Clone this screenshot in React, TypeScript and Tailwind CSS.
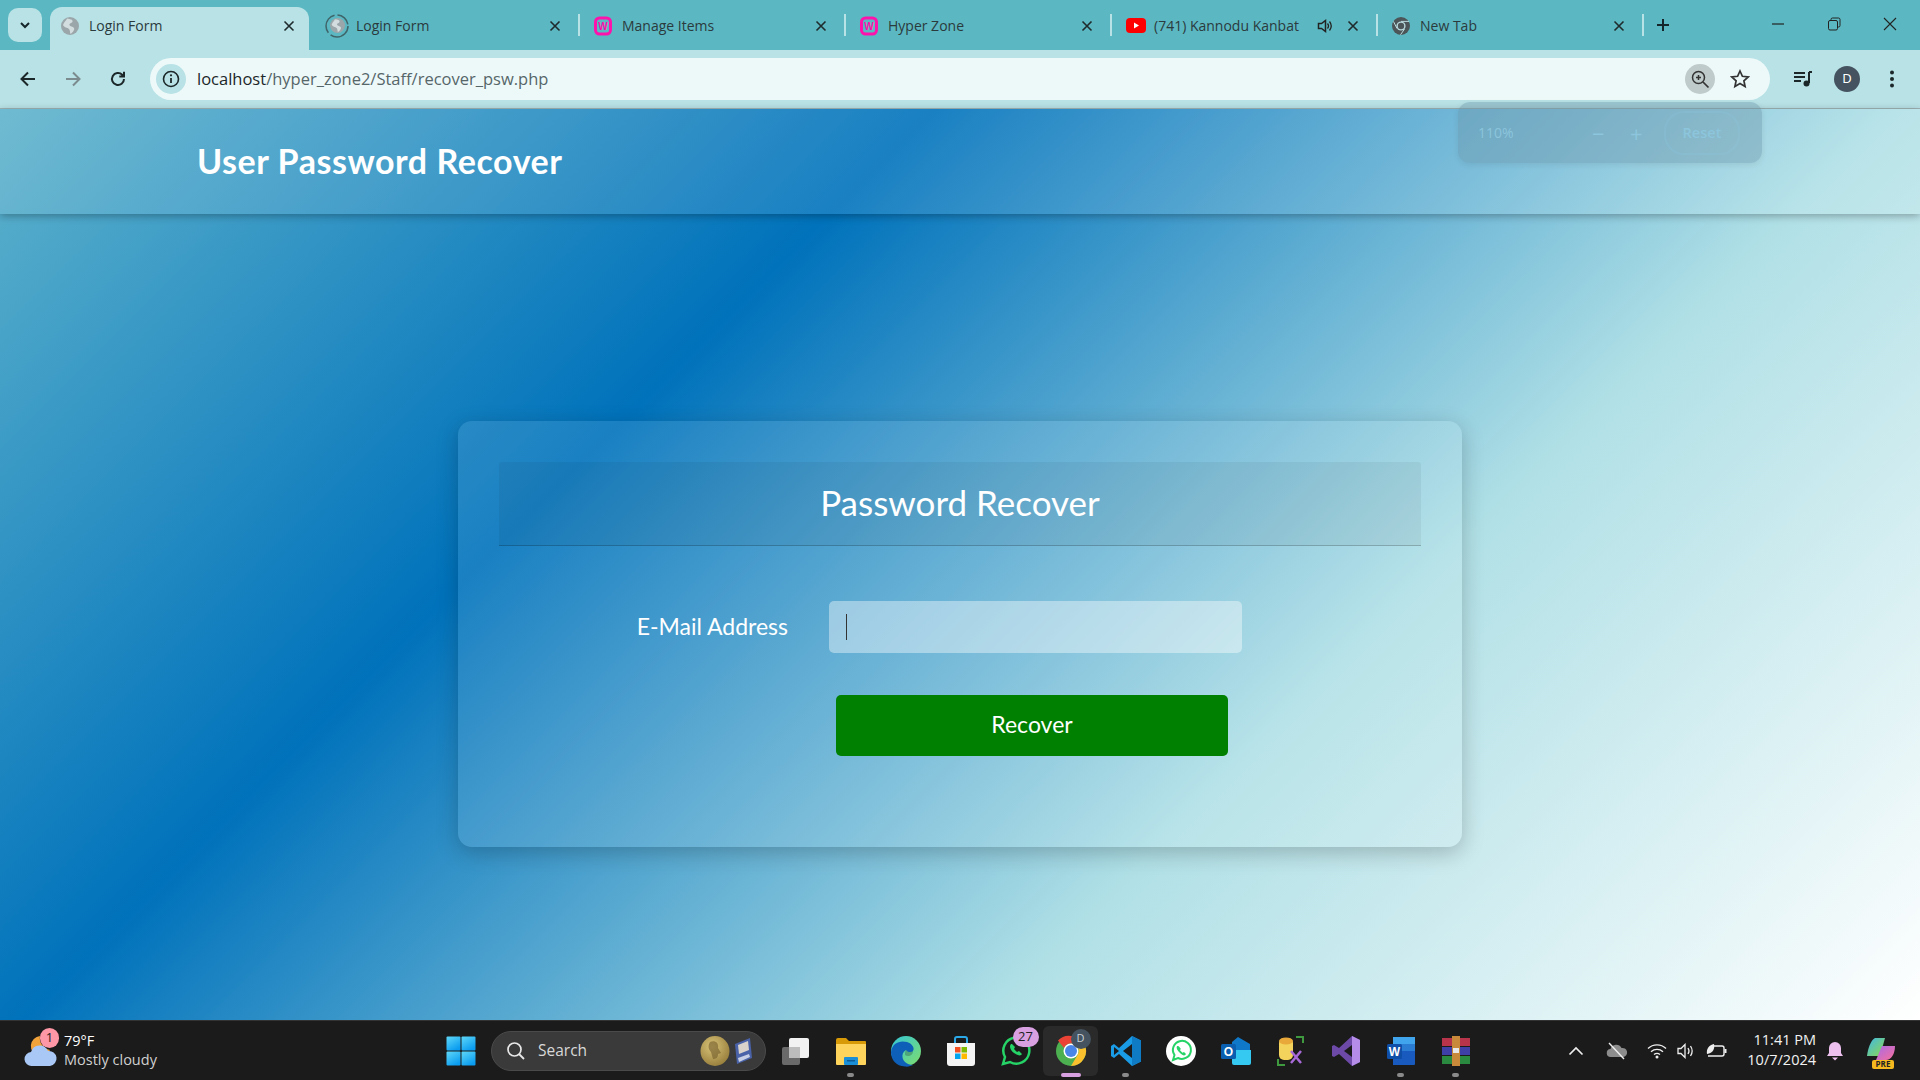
import { FC, ReactNode } from 'react';

const Close: FC = () => (
  <svg width="12" height="12" viewBox="0 0 12 12" className="shrink-0 text-[#1f2a2c]">
    <path d="M1.5 1.5l9 9M10.5 1.5l-9 9" stroke="currentColor" strokeWidth="1.6" />
  </svg>
);

const Globe: FC<{ size?: number }> = ({ size = 18 }) => (
  <svg width={size} height={size} viewBox="0 0 18 18">
    <circle cx="9" cy="9" r="9" fill="#9aa6a9" />
    <path d="M6 1.5c3 .5 6 1 5.5 3S8 6 8.500 8s3.500 1 4.500 3-2 5-3.500 6c-1-2 0-3.500-1.500-5S3 10.500 2 8c1-3 3-4 4-6.500z" fill="#d3dde0" />
  </svg>
);

const WampIcon: FC = () => (
  <svg width="18" height="20" viewBox="0 0 18 20">
    <rect x="1.500" y="2" width="15" height="16" rx="4" fill="none" stroke="#ff12ab" strokeWidth="3" />
    <text x="9" y="14" textAnchor="middle" fontSize="10" fontWeight="700" fill="#ff12ab" fontFamily="Liberation Sans, sans-serif">W</text>
  </svg>
);

const YouTubeIcon: FC = () => (
  <svg width="20" height="15" viewBox="0 0 20 15">
    <rect width="20" height="15" rx="4" fill="#ff0000" />
    <path d="M8 4.500l5 3-5 3z" fill="#fff" />
  </svg>
);

const ChromeMono: FC = () => (
  <svg width="18" height="18" viewBox="0 0 18 18">
    <circle cx="9" cy="9" r="9" fill="#4c5659" />
    <circle cx="9" cy="9" r="4.600" fill="#b9d9dd" />
    <circle cx="9" cy="9" r="3.200" fill="#4c5659" />
    <path d="M9 4.400h8M5 11.500L1.500 4.500M12.500 12L8.500 17.800" stroke="#b9d9dd" strokeWidth="1" />
  </svg>
);

const Spinner: FC = () => (
  <div className="relative flex h-6 w-6 items-center justify-center">
    <svg width="24" height="24" viewBox="0 0 24 24" className="absolute inset-0">
      <circle cx="12" cy="12" r="11" fill="none" stroke="#3f6469" strokeWidth="1.500" strokeDasharray="24 3 22 3 15 2" />
    </svg>
    <Globe size={15} />
  </div>
);

interface TabProps {
  title: string;
  icon: ReactNode;
  active?: boolean;
  separator?: boolean;
  audio?: boolean;
}

const Tab: FC<TabProps> = ({ title, icon, active, separator, audio }) => (
  <div
    className={
      active
        ? 'mr-[5px] flex h-[43px] w-[259px] shrink-0 items-center self-end rounded-t-[12px] bg-[#b8e2e6] pb-[6px] pl-[11px] pr-[14px]'
        : 'relative flex h-[43px] w-[266px] shrink-0 items-center self-end pb-[6px] pl-[14px] pr-[19px]'
    }
  >
    <div className="flex w-[28px] shrink-0 items-center">{icon}</div>
    <span className="min-w-0 flex-1 overflow-hidden whitespace-nowrap text-[14px] text-[#2b3a3d]" style={{ fontFamily: 'Open Sans, sans-serif' }}>{title}</span>
    {audio && (
      <svg width="16" height="16" viewBox="0 0 16 16" className="ml-[10px] mr-[14px] shrink-0 text-[#222]">
        <path d="M1.500 5.500h3l4-3v11l-4-3h-3z" fill="none" stroke="currentColor" strokeWidth="1.500" />
        <path d="M10.500 5.500c1.200 1.500 1.200 3.500 0 5M12.500 3.500c2.200 2.800 2.200 6.200 0 9" fill="none" stroke="currentColor" strokeWidth="1.300" />
      </svg>
    )}
    <Close />
    {separator && <div className="absolute right-0 top-[7px] h-[22px] w-[2px] bg-[#b8e2e6]" />}
  </div>
);

const TitleBar: FC = () => (
  <div className="flex h-[50px] shrink-0 items-stretch bg-[#5bb8c2]">
    <div className="ml-[8px] mt-[8px] flex h-[34px] w-[34px] items-center justify-center rounded-[10px] bg-[#b8e2e6]">
      <svg width="12" height="12" viewBox="0 0 12 12">
        <path d="M2 4l4 4 4-4" fill="none" stroke="#15262a" strokeWidth="2" />
      </svg>
    </div>
    <div className="ml-[8px] flex">
      <Tab active title="Login Form" icon={<Globe />} />
      <Tab title="Login Form" separator icon={<div className="-ml-[3px]"><Spinner /></div>} />
      <Tab title="Manage Items" separator icon={<WampIcon />} />
      <Tab title="Hyper Zone" separator icon={<WampIcon />} />
      <Tab title="(741) Kannodu Kanbat" separator audio icon={<YouTubeIcon />} />
      <Tab title="New Tab" separator icon={<ChromeMono />} />
    </div>
    <div className="ml-[12px] flex items-center pb-[1px]">
      <svg width="14" height="14" viewBox="0 0 14 14">
        <path d="M7 1v12M1 7h12" stroke="#15262a" strokeWidth="2" />
      </svg>
    </div>
    <div className="ml-auto flex items-center gap-[42px] pr-[23px] pb-[2px]">
      <svg width="14" height="14" viewBox="0 0 14 14">
        <path d="M1 7h12" stroke="#222" strokeWidth="1.200" />
      </svg>
      <svg width="14" height="14" viewBox="0 0 14 14">
        <path d="M4 3V2.500A1.500 1.500 0 0 1 5.500 1h6A1.500 1.500 0 0 1 13 2.500v6A1.500 1.500 0 0 1 11.500 10H11" fill="none" stroke="#222" strokeWidth="1" />
        <rect x="1.500" y="3.500" width="9" height="9.500" rx="1.500" fill="none" stroke="#222" strokeWidth="1" />
      </svg>
      <svg width="14" height="14" viewBox="0 0 14 14">
        <path d="M1 1l12 12M13 1L1 13" stroke="#222" strokeWidth="1.100" />
      </svg>
    </div>
  </div>
);

const Toolbar: FC = () => (
  <div className="flex h-[59px] shrink-0 items-start border-b border-[#9fb4b6] bg-[#b8e2e6] pt-[8px]">
    <div className="flex h-[42px] w-[150px] shrink-0 items-center gap-[25px] pl-[18px]">
      <svg width="20" height="20" viewBox="0 0 20 20">
        <path d="M17 10H4M10 3.500L3.500 10l6.500 6.500" fill="none" stroke="#1c2729" strokeWidth="2" />
      </svg>
      <svg width="20" height="20" viewBox="0 0 20 20">
        <path d="M3 10h13M10 3.500l6.500 6.500-6.500 6.500" fill="none" stroke="#7b8b8e" strokeWidth="2" />
      </svg>
      <svg width="20" height="20" viewBox="0 0 20 20">
        <path d="M16 10a6 6 0 1 1-1.800-4.300L16 7.500M16 2.800v4.700h-4.700" fill="none" stroke="#1c2729" strokeWidth="2" />
      </svg>
    </div>
    <div className="flex h-[42px] w-[1620px] shrink-0 items-center rounded-full bg-[#edf9f9] pl-[6px] pr-[20px]">
      <div className="flex h-[30px] w-[30px] items-center justify-center rounded-full bg-[#b8e2e6]">
        <svg width="18" height="18" viewBox="0 0 18 18">
          <circle cx="9" cy="9" r="7.500" fill="none" stroke="#1c2729" strokeWidth="1.600" />
          <path d="M9 8v5" stroke="#1c2729" strokeWidth="1.800" />
          <circle cx="9" cy="5.300" r="1.100" fill="#1c2729" />
        </svg>
      </div>
      <span className="ml-[11px] pt-[1px] text-[16.500px] text-[#1c2729]" style={{ fontFamily: 'Open Sans, sans-serif' }}>
        localhost<span className="text-[#566669]">/hyper_zone2/Staff/recover_psw.php</span>
      </span>
      <div className="ml-auto flex h-[30px] w-[30px] items-center justify-center rounded-full bg-[#bfcaca]">
        <svg width="20" height="20" viewBox="0 0 20 20">
          <circle cx="8.500" cy="8.500" r="6" fill="none" stroke="#333" strokeWidth="1.500" />
          <path d="M13 13l5.500 5.500" stroke="#333" strokeWidth="1.700" />
          <path d="M8.500 6v5M6 8.500h5" stroke="#333" strokeWidth="1.500" />
        </svg>
      </div>
      <svg width="20" height="20" viewBox="0 0 20 20" className="ml-[15px]">
        <path d="M10 2l2.400 5.300 5.800.6-4.300 3.900 1.200 5.700L10 14.600l-5.100 2.900 1.200-5.700L1.800 7.900l5.800-.6z" fill="none" stroke="#333" strokeWidth="1.700" />
      </svg>
    </div>
    <div className="flex h-[42px] flex-1 items-center">
      <svg width="20" height="20" viewBox="0 0 20 20" className="ml-[23px]">
        <path d="M1 4h11M1 8h11M1 12h7" stroke="#1c2729" strokeWidth="2" />
        <path d="M16 3v11" stroke="#1c2729" strokeWidth="2" />
        <path d="M16 3h3" stroke="#1c2729" strokeWidth="2" />
        <circle cx="13.500" cy="14.500" r="3" fill="#1c2729" />
      </svg>
      <div className="ml-[21px] flex h-[26px] w-[26px] items-center justify-center rounded-full bg-[#44535f] text-[13px] text-white">D</div>
      <svg width="6" height="20" viewBox="0 0 6 20" className="ml-[29px]">
        <circle cx="3" cy="3.500" r="2" fill="#1c2729" />
        <circle cx="3" cy="10" r="2" fill="#1c2729" />
        <circle cx="3" cy="16.500" r="2" fill="#1c2729" />
      </svg>
    </div>
  </div>
);

const ZoomBubble: FC = () => (
  <div className="absolute left-[1458px] top-[-7px] flex h-[61px] w-[304px] items-center rounded-[12px] bg-[#6a94a8]/40 pl-[20px] shadow-[0_2px_6px_rgba(0,0,0,0.08)]" style={{ fontFamily: 'Open Sans, sans-serif' }}>
    <span className="w-[114px] text-[14px] text-[#8cc5dc]">110%</span>
    <span className="w-[38px] text-[22px] leading-none text-[#8cc5dc]">−</span>
    <span className="w-[34px] text-[22px] leading-none text-[#8cc5dc]">+</span>
    <div className="flex h-[44px] w-[76px] items-center justify-center rounded-[20px] border-2 border-[#8cc5dc]/30 text-[14.500px] font-semibold text-[#8cc5dc]">Reset</div>
  </div>
);

const Page: FC = () => (
  <main
    className="relative flex min-h-0 flex-1 flex-col bg-[linear-gradient(135deg,#5fb3cc_0%,#0072bb_33%,#b0e0e6_67%,#ffffff_100%)]"
    style={{ fontFamily: 'Lato, sans-serif' }}
  >
    <header className="flex h-[105px] shrink-0 items-center bg-white/10 pb-[2px] pl-[197px] shadow-[0_2px_8px_rgba(0,0,0,0.3)]">
      <h1 className="text-[34px] font-bold tracking-[0.55px] text-white">User Password Recover</h1>
    </header>
    <ZoomBubble />
    <div className="mx-auto mt-[207px] flex h-[426px] w-[1004px] flex-col rounded-[14px] bg-white/10 px-[41px] pt-[41px] shadow-[0_6px_22px_rgba(0,0,0,0.22)]">
      <div className="flex h-[84px] items-center justify-center rounded-t-[3px] border-b border-black/20 bg-black/[0.05] pb-[2px]">
        <h2 className="text-[35px] text-white">Password Recover</h2>
      </div>
      <div className="mt-[55px] flex items-center">
        <label className="w-[289px] pb-[2px] text-right text-[23px] text-white">E-Mail Address</label>
        <div className="ml-[41px] flex h-[52px] w-[413px] items-center rounded-[5px] bg-white/40 pl-[17px]">
          <div className="h-[26px] w-[1px] bg-[#333]" />
        </div>
      </div>
      <button type="button" className="ml-[337px] mt-[42px] h-[61px] w-[392px] rounded-[5px] bg-[#008000] pb-[2px] text-[23px] text-white">
        Recover
      </button>
    </div>
  </main>
);

const AppSlot: FC<{ children: ReactNode; mark?: 'dot' | 'active' }> = ({ children, mark }) => (
  <div className={mark === 'active' ? 'relative flex h-[50px] w-[55px] items-center justify-center rounded-[6px] bg-[#2a2a2a]' : 'relative flex h-[50px] w-[55px] items-center justify-center'}>
    {children}
    {mark === 'dot' && <div className="absolute bottom-[-1px] left-[24px] h-[4px] w-[7px] rounded-full bg-[#8a8a8a]" />}
    {mark === 'active' && <div className="absolute bottom-[-1px] left-[18px] h-[4px] w-[20px] rounded-full bg-[#d8a0e0]" />}
  </div>
);

const Taskbar: FC = () => (
  <footer className="relative flex h-[60px] shrink-0 items-center border-t border-[#333] bg-[#1b1b1b] text-white" style={{ fontFamily: 'Open Sans, sans-serif' }}>
    {/* weather */}
    <div className="relative flex w-[446px] shrink-0 items-center pl-[24px]">
      <svg width="34" height="36" viewBox="0 0 34 36">
        <path d="M16 3a10 10 0 1 0 10 14A12 12 0 0 1 16 3z" fill="#f2a33a" />
        <path d="M8 33a7 7 0 0 1-1-14 9 9 0 0 1 17-1 7.500 7.500 0 0 1 2 15z" fill="#a9c8f5" />
      </svg>
      <div className="absolute left-[40px] top-[-3px] flex h-[20px] w-[19px] items-center justify-center rounded-full bg-[#ff97a6] text-[13px] text-[#222]">1</div>
      <div className="ml-[6px] flex flex-col pb-[2px] leading-[19px]">
        <span className="text-[14.500px]">79°F</span>
        <span className="text-[14.500px] text-[#d0d0d0]">Mostly cloudy</span>
      </div>
    </div>
    {/* start + search */}
    <svg width="30" height="30" viewBox="0 0 30 30" className="shrink-0">
      <defs>
        <linearGradient id="winGrad" x1="0" y1="0" x2="0.6" y2="1">
          <stop offset="0" stopColor="#5fd8f8" />
          <stop offset="1" stopColor="#0a9cf0" />
        </linearGradient>
      </defs>
      <rect x="0.500" y="0.500" width="14" height="14" rx="1" fill="url(#winGrad)" />
      <rect x="15.500" y="0.500" width="14" height="14" rx="1" fill="url(#winGrad)" />
      <rect x="0.500" y="15.500" width="14" height="14" rx="1" fill="url(#winGrad)" />
      <rect x="15.500" y="15.500" width="14" height="14" rx="1" fill="url(#winGrad)" />
    </svg>
    <div className="ml-[15px] flex h-[40px] w-[275px] shrink-0 items-center rounded-full border border-[#4a4a4a] bg-[#3a3a3a] pl-[14px]">
      <svg width="20" height="20" viewBox="0 0 20 20" className="shrink-0">
        <circle cx="8.500" cy="8.500" r="6.500" fill="none" stroke="#e8e8e8" strokeWidth="1.700" />
        <path d="M13 13l5 5" stroke="#e8e8e8" strokeWidth="1.800" />
      </svg>
      <span className="ml-[12px] text-[15.500px] text-[#d8d8d8]">Search</span>
      <svg width="54" height="32" viewBox="0 0 54 32" className="ml-auto mr-[11px] shrink-0">
        <defs>
          <radialGradient id="medal" cx="0.4" cy="0.35" r="0.8">
            <stop offset="0" stopColor="#d8c277" />
            <stop offset="1" stopColor="#8d7433" />
          </radialGradient>
        </defs>
        <ellipse cx="15" cy="16" rx="14.500" ry="15" fill="url(#medal)" />
        <path d="M10 7c5-2 9 1 8 6l3 5-3 1c0 4-2 5-5 5l-2-7c-3-3-3-7-1-10z" fill="#7a6330" opacity="0.65" />
        <path d="M35 9l15-6 2 20-15 6z" fill="#4a63a8" />
        <path d="M38 10l10-4 1 9-10 4z" fill="#d9d3cc" />
        <path d="M38 23l11-4 1 3-11 5z" fill="#c6cfe6" />
      </svg>
    </div>
    {/* pinned apps */}
    <div className="ml-[2px] flex items-center">
      <AppSlot>
        <svg width="30" height="30" viewBox="0 0 30 30">
          <rect x="1" y="11" width="18" height="18" rx="2" fill="#6a6a6a" />
          <rect x="8" y="2" width="20" height="20" rx="2" fill="#f2f2f2" />
          <rect x="8" y="11" width="11" height="11" fill="#bdbdbd" />
        </svg>
      </AppSlot>
      <AppSlot mark="dot">
        <svg width="32" height="30" viewBox="0 0 32 30">
          <path d="M1 4a2 2 0 0 1 2-2h8l3 3h16a1 1 0 0 1 1 1v4H1z" fill="#d99a08" />
          <path d="M1 8h30v20a1 1 0 0 1-1 1H2a1 1 0 0 1-1-1z" fill="#ffd45c" />
          <rect x="9" y="21" width="14" height="8" rx="1" fill="#1a8fd8" />
          <rect x="12" y="24" width="8" height="1.500" fill="#0c5a96" />
        </svg>
      </AppSlot>
      <AppSlot>
        <svg width="32" height="32" viewBox="0 0 32 32">
          <defs>
            <linearGradient id="edgeA" x1="0" y1="0" x2="1" y2="1">
              <stop offset="0" stopColor="#34c7d8" />
              <stop offset="1" stopColor="#7fdc6a" />
            </linearGradient>
          </defs>
          <circle cx="16" cy="16" r="15" fill="url(#edgeA)" />
          <path d="M1 17C2 8 10 5 17 7c5 1.500 8 6 6 9-2 2-6 1-7-1-4 2-5 8-1 12 2 2 5 3 8 3-2 1-5 2-8 1.500C6 31 1 25 1 17z" fill="#0d5fb8" />
          <path d="M16 15c1 2 5 3 7 1 0 5-5 6-8 4 0-2 0-4 1-5z" fill="#1a1a1a" opacity="0.25" />
        </svg>
      </AppSlot>
      <AppSlot>
        <svg width="30" height="32" viewBox="0 0 30 32">
          <path d="M9 8V4a2 2 0 0 1 2-2h8a2 2 0 0 1 2 2v4" fill="none" stroke="#2aa8e8" strokeWidth="2" />
          <path d="M1 8h28v20a3 3 0 0 1-3 3H4a3 3 0 0 1-3-3z" fill="#f4f4f4" />
          <rect x="9" y="12" width="5.500" height="5.500" fill="#f25022" />
          <rect x="15.500" y="12" width="5.500" height="5.500" fill="#7fba00" />
          <rect x="9" y="18.500" width="5.500" height="5.500" fill="#00a4ef" />
          <rect x="15.500" y="18.500" width="5.500" height="5.500" fill="#ffb900" />
        </svg>
      </AppSlot>
      <AppSlot>
        <div className="relative">
          <svg width="32" height="32" viewBox="0 0 32 32">
            <path d="M3 29l2-7A13 13 0 1 1 10 27z" fill="none" stroke="#25d366" strokeWidth="2.500" />
            <path d="M11 9c-2 2-1 6 3 9s7 3 8 1l-3-3-2 1-3-3 1-2-3-3z" fill="#25d366" />
          </svg>
          <div className="absolute left-[13px] top-[-8px] flex h-[20px] w-[26px] items-center justify-center rounded-full bg-[#d8a0e0] text-[13px] text-[#222]">27</div>
        </div>
      </AppSlot>
      <AppSlot mark="active">
        <div className="relative">
          <svg width="32" height="32" viewBox="0 0 32 32">
            <circle cx="16" cy="16" r="15" fill="#4caf50" />
            <path d="M16 1a15 15 0 0 1 13 7.500H16A7.500 7.500 0 0 0 9 13L3 5.500A15 15 0 0 1 16 1z" fill="#ea4335" />
            <path d="M29 8.500A15 15 0 0 1 16 31l6.500-11A7.500 7.500 0 0 0 22.500 12z" fill="#fbc02d" />
            <circle cx="16" cy="16" r="7.500" fill="#fff" />
            <circle cx="16" cy="16" r="6" fill="#4a86e8" />
          </svg>
          <div className="absolute left-[16px] top-[-6px] flex h-[20px] w-[20px] items-center justify-center rounded-full bg-[#44535f] text-[11px] text-[#c8d0d8]">D</div>
        </div>
      </AppSlot>
      <AppSlot mark="dot">
        <svg width="32" height="32" viewBox="0 0 32 32">
          <path d="M22 1l9 4.500v21L22 31 9 19l-5 4-3-2v-10l3-2 5 4z" fill="#1a9be6" />
          <path d="M22 1l9 4.500v21L22 31z" fill="#0f7bc4" />
          <path d="M22 9v14l-9-7z" fill="#1b1b1b" />
          <path d="M4 12l5 4-5 4z" fill="#1b1b1b" />
        </svg>
      </AppSlot>
      <AppSlot>
        <svg width="30" height="30" viewBox="0 0 30 30">
          <circle cx="15" cy="15" r="15" fill="#fff" />
          <path d="M7 24l1.500-5A9 9 0 1 1 12 22z" fill="none" stroke="#25d366" strokeWidth="2" />
          <path d="M11 10c-1 2 0 4 3 7s5 3 6 1l-2-2-1.500.7-2.500-2.500.8-1.500-2-2.500z" fill="#25d366" />
        </svg>
      </AppSlot>
      <AppSlot>
        <svg width="32" height="30" viewBox="0 0 32 30">
          <path d="M18 1l12 7v16H12V6z" fill="#0f78c8" />
          <path d="M12 14h19v13a2 2 0 0 1-2 2H14a2 2 0 0 1-2-2z" fill="#35c8f0" />
          <rect x="1" y="8" width="15" height="15" rx="1.500" fill="#0a5fb0" />
          <text x="8.500" y="20" textAnchor="middle" fontSize="12" fontWeight="700" fill="#fff" fontFamily="Liberation Sans, sans-serif">O</text>
        </svg>
      </AppSlot>
      <AppSlot>
        <svg width="30" height="32" viewBox="0 0 30 32">
          <rect x="3" y="3" width="14" height="22" rx="5" fill="#f3d35c" />
          <ellipse cx="10" cy="6" rx="7" ry="3.500" fill="#e8a93a" />
          <path d="M20 2h7v6M2 24v6h7" fill="none" stroke="#3f9a3f" strokeWidth="2" />
          <path d="M15 16l10 12M25 16L15 28" stroke="#a86ad8" strokeWidth="2.500" />
        </svg>
      </AppSlot>
      <AppSlot>
        <svg width="30" height="32" viewBox="0 0 30 32">
          <path d="M21 1l8 4v22l-8 4L8 19l-5 3-2-1V11l2-1 5 3z" fill="#6d4aa8" />
          <path d="M21 1l8 4v22l-8 4z" fill="#b58ce8" />
          <path d="M21 10v12l-8-6z" fill="#1b1b1b" />
        </svg>
      </AppSlot>
      <AppSlot mark="dot">
        <svg width="30" height="30" viewBox="0 0 30 30">
          <path d="M7 1h21a1 1 0 0 1 1 1v26a1 1 0 0 1-1 1H7z" fill="#185abd" />
          <rect x="7" y="1" width="22" height="7" fill="#41a5ee" />
          <rect x="7" y="8" width="22" height="7" fill="#2b7cd3" />
          <rect x="1" y="8" width="15" height="15" rx="1.500" fill="#0f4fa8" />
          <text x="8.500" y="20" textAnchor="middle" fontSize="12" fontWeight="700" fill="#fff" fontFamily="Liberation Sans, sans-serif">W</text>
        </svg>
      </AppSlot>
      <AppSlot mark="dot">
        <svg width="30" height="30" viewBox="0 0 30 30">
          <rect x="1" y="2" width="28" height="8" fill="#b8344a" />
          <rect x="1" y="11" width="28" height="8" fill="#3f3fa8" />
          <rect x="1" y="20" width="28" height="8" fill="#2a8a3f" />
          <rect x="11" y="0" width="8" height="30" fill="#c88a3a" />
          <rect x="12" y="12" width="6" height="5" fill="#e8e8e8" />
        </svg>
      </AppSlot>
    </div>
    {/* tray */}
    <div className="ml-auto flex items-center pr-[24px]">
      <svg width="16" height="10" viewBox="0 0 16 10">
        <path d="M1.500 8.500L8 2l6.500 6.500" fill="none" stroke="#eee" strokeWidth="1.700" />
      </svg>
      <svg width="22" height="18" viewBox="0 0 22 18" className="ml-[22px]">
        <path d="M5 15a4 4 0 0 1-.5-8 6 6 0 0 1 11-1 4.500 4.500 0 0 1 2 9z" fill="#8d8d8d" />
        <path d="M3 1l15 16" stroke="#eee" strokeWidth="1.400" />
      </svg>
      <svg width="20" height="16" viewBox="0 0 20 16" className="ml-[19px]">
        <path d="M1 5.500a13 13 0 0 1 18 0M4 8.700a9 9 0 0 1 12 0M7 11.500a5 5 0 0 1 6 0" fill="none" stroke="#eee" strokeWidth="1.400" />
        <circle cx="10" cy="14" r="1.500" fill="#eee" />
      </svg>
      <svg width="20" height="16" viewBox="0 0 20 16" className="ml-[10px]">
        <path d="M1 5.500h3l4-4v13l-4-4H1z" fill="none" stroke="#eee" strokeWidth="1.300" />
        <path d="M11 5c1.200 1.800 1.200 4.200 0 6M13.500 3c2 3 2 7 0 10" fill="none" stroke="#eee" strokeWidth="1.300" />
      </svg>
      <svg width="22" height="16" viewBox="0 0 22 16" className="ml-[8px]">
        <path d="M8 3h9a2 2 0 0 1 2 2v6a2 2 0 0 1-2 2H3" fill="none" stroke="#eee" strokeWidth="1.400" />
        <rect x="19.500" y="6" width="2" height="4" fill="#eee" />
        <path d="M2 11C1 6 4 2 9 1c1 5-1 9-7 10z" fill="#eee" />
      </svg>
      <div className="ml-[20px] flex flex-col items-end pb-[2px] text-[14.500px] leading-[20px] text-[#f2f2f2]">
        <span>11:41 PM</span>
        <span>10/7/2024</span>
      </div>
      <svg width="18" height="20" viewBox="0 0 18 20" className="ml-[10px]">
        <path d="M9 1a6 6 0 0 1 6 6v5l2 3H1l2-3V7a6 6 0 0 1 6-6z" fill="#eec0f0" />
        <path d="M6 16.500h6L9 19.500z" fill="#eec0f0" />
      </svg>
      <div className="relative ml-[22px] h-[30px] w-[30px]">
        <svg width="30" height="30" viewBox="0 0 30 30">
          <defs>
            <linearGradient id="copA" x1="0" y1="0" x2="1" y2="1">
              <stop offset="0" stopColor="#3fb8e8" />
              <stop offset="1" stopColor="#8fd84a" />
            </linearGradient>
            <linearGradient id="copB" x1="0" y1="0" x2="1" y2="1">
              <stop offset="0" stopColor="#a86ae8" />
              <stop offset="1" stopColor="#f8709a" />
            </linearGradient>
          </defs>
          <path d="M9 2h10l-5 18H1C2 12 5 4 9 2z" fill="url(#copA)" />
          <path d="M16 10h13c0 8-4 14-9 14H10z" fill="url(#copB)" />
        </svg>
        <div className="absolute bottom-[-3px] left-[6px] flex h-[9px] w-[22px] items-center justify-center rounded-[2px] bg-[#f5b81f] text-[8px] font-bold leading-none text-[#222]">PRE</div>
      </div>
    </div>
  </footer>
);

export default function App() {
  return (
    <div className="flex h-screen w-full flex-col overflow-hidden">
      <TitleBar />
      <Toolbar />
      <Page />
      <Taskbar />
    </div>
  );
}
